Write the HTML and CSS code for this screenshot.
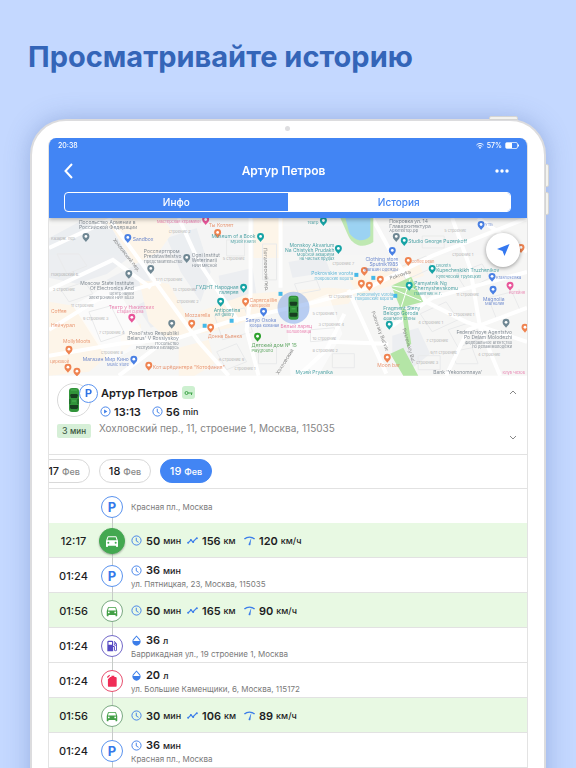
FILE: index.html
```html
<!DOCTYPE html>
<html lang="ru">
<head>
<meta charset="utf-8">
<meta name="viewport" content="width=device-width, initial-scale=1">
<title>История поездок</title>
<link rel="stylesheet" href="styles.css">
</head>
<body>
<svg class="sprite" aria-hidden="true">
  <symbol id="car" viewBox="0 0 24 24"><path d="M18.92 6.01C18.72 5.42 18.16 5 17.5 5h-11c-.66 0-1.21.42-1.42 1.01L3 12v8c0 .55.45 1 1 1h1c.55 0 1-.45 1-1v-1h12v1c0 .55.45 1 1 1h1c.55 0 1-.45 1-1v-8zM6.5 16a1.5 1.5 0 1 1 0-3 1.5 1.5 0 0 1 0 3zm11 0a1.5 1.5 0 1 1 0-3 1.5 1.5 0 0 1 0 3zM5 11l1.5-4.5h11L19 11z"/></symbol>
  <symbol id="fuel" viewBox="0 0 24 24"><path fill-rule="evenodd" d="M19.77 7.23l.01-.01-3.72-3.72L15 4.56l2.11 2.11A2.5 2.5 0 0 0 18 11.5c.36 0 .69-.08 1-.21v7.21a1 1 0 0 1-2 0V14a2 2 0 0 0-2-2h-1V5a2 2 0 0 0-2-2H6a2 2 0 0 0-2 2v16h10v-7.5h1.500v5a2.500 2.500 0 0 0 5 0V9c0-.69-.28-1.320-.73-1.770zM12 10H6V5h6zM18 10a1 1 0 1 1 0-2 1 1 0 0 1 0 2z"/></symbol>
  <symbol id="canister" viewBox="0 0 24 24"><path d="M5 9l4-4h2V3h5v2h2a2 2 0 0 1 2 2v13a2 2 0 0 1-2 2H7a2 2 0 0 1-2-2z"/><path d="M4 6l4-4" stroke="currentColor" stroke-width="2"/></symbol>
  <symbol id="clock" viewBox="0 0 24 24"><g fill="none" stroke="currentColor" stroke-width="2"><circle cx="12" cy="12" r="10"/><path d="M11.500 6v7l5 3"/></g></symbol>
  <symbol id="play" viewBox="0 0 24 24"><circle cx="12" cy="12" r="10" fill="none" stroke="currentColor" stroke-width="2"/><path d="M9 7.500v9l7-4.500z"/></symbol>
  <symbol id="route" viewBox="0 0 24 24"><path d="M2.500 17l6-6 4.500 4 8-8" fill="none" stroke="currentColor" stroke-width="2.500"/><circle cx="2.500" cy="17" r="2.200"/><circle cx="8.500" cy="11" r="2.200"/><circle cx="13.500" cy="15" r="2.200"/><circle cx="21.500" cy="7" r="2.200"/></symbol>
  <symbol id="speed" viewBox="0 0 24 24"><path d="M1 9c6-6 16-6 22 0" fill="none" stroke="currentColor" stroke-width="3"/><path d="M16 6L14 21a2 2 0 0 1-4-1z"/></symbol>
  <symbol id="drop" viewBox="0 0 24 24"><path fill-rule="evenodd" d="M12 1l6 6.500a9 9 0 1 1-12 0zM12 4L7.500 9C6 10.500 5 12 5 13h14c0-1-1-2.500-2.500-4z"/></symbol>
  <symbol id="topcar" viewBox="0 0 12 26"><rect x="1" y="1" width="10" height="24" rx="3" fill="#31943a"/><path d="M2 8l1-1h6l1 1-1 3H3zM2 18h8v3l-1 1H3l-1-1z" fill="#173e20"/><path d="M2 12v5M10 12v5" stroke="#1b5025"/><path d="M3 3h6M4 14h4" stroke="#4cb354"/></symbol>
  <defs>
    <g id="pin"><path d="M4 0a3.500 3.500 0 0 1 3.500 3.500C7.500 6 5 7 4 9 3 7 .5 6 .5 3.500A3.500 3.500 0 0 1 4 0z"/><circle cx="4" cy="3.500" r="1.400" fill="#fff"/></g>
  </defs>
</svg>

<main class="promo">
  <h1 class="headline">Просматривайте историю</h1>
  <div class="tablet">
    <span class="key key-top"></span><span class="key key-up"></span><span class="key key-down"></span>
    <span class="camera"></span>
    <div class="screen">
      <header class="bar">
        <div class="status">
          <span>20:38</span>
          <span class="status-right">
            <svg width="8" height="6" viewBox="0 0 16 12" fill="none" stroke="#fff" stroke-width="2"><path d="M1 4c4-4 10-4 14 0M3.500 7c3-2.500 6-2.500 9 0"/><path d="M5.500 9a4 4 0 0 1 5 0L8 12z" fill="#fff" stroke="none"/></svg>
            <span>57%</span>
            <svg width="15" height="7" viewBox="0 0 15 7"><rect x=".5" y=".5" width="12" height="6" rx="1.500" fill="none" stroke="#fff" stroke-opacity=".7"/><rect x="1" y="1" width="6" height="5" fill="#fff"/><path d="M13.500 2.500v2" stroke="#fff"/></svg>
          </span>
        </div>
        <div class="title-row">
          <button class="icon-btn back" aria-label="Назад"><svg width="10" height="16" viewBox="0 0 10 16" fill="none" stroke="#fff" stroke-width="2"><path d="M8 1L1.500 8 8 15"/></svg></button>
          <h2>Артур Петров</h2>
          <button class="icon-btn more" aria-label="Ещё"><svg width="14" height="4" viewBox="0 0 14 4" fill="#fff"><circle cx="2" cy="2" r="1.700"/><circle cx="7" cy="2" r="1.700"/><circle cx="12" cy="2" r="1.700"/></svg></button>
        </div>
        <div class="tabs">
          <button class="tab">Инфо</button>
          <button class="tab tab-on" aria-pressed="true">История</button>
        </div>
      </header>

      <section class="map" aria-label="Карта">
        <svg class="map-art" viewBox="0 0 479 158" preserveAspectRatio="xMidYMid slice">
          <rect width="479" height="158" fill="#f6f6f5"/>
          <g fill="#eceef1">
            <path d="M0 20l30-16 34 8 16 28-22 16-30 10L0 60zM58 62l34-18 10 20-34 16zM118 20l30-10 14 44-10 30-20-30zM88 88l14-8 14 24-14 6zM170 58l34-8 4 28-34 6zM240 44l36-6 6 16-38 6zM344 118l26-8 12 26-20 16-18-14z"/>
          </g>
          <g fill="#fdf5e9">
            <path d="M54 0h60l10 14-14 20-24 12-22-34zM90 62l30 4 26 46-24 12-22-20zM0 84l24 4 36 50-20 16-40 4zM150 94l50-18 80-6 30 2-10 14-88 10-30 14-30 6zM300 60l70-16 6 14-66 20zM72 116l20-10v14l-20 16zM130 130l30-8 6 24-20 12h-16zM205 0h30l-4 40h-26z"/>
          </g>
          <g fill="#fff"><path d="M238 92l42-16 14 40-24 42h-28zM24 88l40-24 36 60-40 20z" opacity=".6"/></g>
          <g fill="none" stroke="#e9eaeb" stroke-width="1">
            <path d="M8 36h22l8 12-20 8zM12 72l24-8 8 12-24 8zM40 94l22-6 14 28-24 8zM166 98l30-8 8 24-30 8zM178 22h18v16h-18zM214 26h14v36h-14zM246 66l22-4 4 10-22 4zM262 112l24-2v12l-24 2zM372 96l26-12 12 18-26 12zM400 112l24-8 10 16-24 10zM374 18h22v12h-22zM350 50l28-12 6 12-26 12zM408 56l26-10 8 14-24 12zM168 134l20-8 10 18-20 8zM210 128h18v18h-18zM370 138h22v14h-22zM404 134l20-4 6 16h-22zM440 80l24-6 8 18-24 8zM284 136h22v14h-22z"/>
          </g>
          <g fill="none" stroke="#fff" stroke-width="4">
            <path d="M0 30l60-28M60 0l90 124 30 34M0 72l64-30 38 28M0 112l48-30 64-18M0 138l70-12 60-6 50-16 80-18 60-16 64-32 95-38M130 0l20 44 40 60M202 0v76l-4 36 12 46M232 0v70M324 0l24 44 30 40 40 20 61 20M300 72l38 84M296 96l-18 36-28 26M280 124l60 2M344 108l40-28 95-26M404 0l18 50 10 60 20 48M430 0l49 34M70 158l50-38M398 158l22-46 59-22"/>
          </g>
          <path d="M292 0h33v24c-10 7-20 4-25-6z" fill="#bfe8b3"/>
          <path d="M297 0h25v18c-7 7-16 5-21-3z" fill="#9cd2f2"/>
          <path d="M343 68l20-9 12 25-23 6z" fill="#b4e5a6"/>
          <path d="M344 71l29 12M362 61l-9 28M343 68l28 4" stroke="#fff" fill="none"/>
          <path d="M353 90l5 2 5 34-4 4zM342 136l13-6 15 28h-15z" fill="#b4e5a6"/>

          <g class="t grey">
            <text x="2" y="58">Покровский б.</text><text x="4" y="73">2 строение</text><text x="22" y="89">11 строение</text><text x="34" y="102">9 строение 3</text><text x="50" y="116">7 строение 4</text><text x="52" y="136">строение 8</text><text x="107" y="63">17/1 строение</text><text x="124" y="73">13 строение</text><text x="128" y="85">строение 2</text><text x="2" y="22">Казарм. пер.</text><text x="120" y="15">строение 2</text><text x="174" y="42">5 строение</text><text x="284" y="47">строение 7</text><text x="280" y="80">12 строение</text><text x="264" y="97">5 строение 1</text><text x="270" y="108">3 строение 4</text><text x="264" y="122">10 строение</text><text x="264" y="134">8 строение 2</text><text x="170" y="143">6 строение 9</text><text x="186" y="152">строение 1</text><text x="370" y="106">4 строение 1</text><text x="378" y="124">7 строение</text><text x="382" y="136">9/11 строение</text><text x="368" y="146">строение 3</text><text x="430" y="138">4 строение</text><text x="400" y="98">12 строение 1</text><text x="408" y="78">11 строение</text><text x="404" y="38">строение 1</text><text x="396" y="14">5 строение</text>
          </g>
          <g class="t road"><text transform="translate(64 22) rotate(52)">Хохловский пер.</text><text transform="translate(215 30) rotate(88)">Потаповский пер.</text><text transform="translate(230 157) rotate(-58)">Хохловский</text><text transform="translate(323 94) rotate(70)">Pokrovsky Bul'var</text><text transform="translate(354 111) rotate(74)">Pokrovskiy Bul.</text><text transform="translate(342 62) rotate(-18)">Pokrovka</text></g>

          <g class="pin-slate"><use href="#pin" x="33" y="15"/><use href="#pin" x="134" y="36"/><use href="#pin" x="98" y="47"/><use href="#pin" x="76" y="52"/><use href="#pin" x="119" y="102"/><use href="#pin" x="344" y="15"/><use href="#pin" x="454" y="101"/></g>
          <g class="pin-blue"><use href="#pin" x="75" y="16"/><use href="#pin" x="81" y="138"/><use href="#pin" x="211" y="90"/><use href="#pin" x="340" y="29"/><use href="#pin" x="440" y="55"/><use href="#pin" x="441" y="68"/><use href="#pin" x="429" y="3"/></g>
          <g class="pin-teal"><use href="#pin" x="208" y="15"/><use href="#pin" x="191" y="66"/><use href="#pin" x="168" y="80"/><use href="#pin" x="271" y="-1"/><use href="#pin" x="286" y="27"/><use href="#pin" x="352" y="19"/><use href="#pin" x="380" y="47"/><use href="#pin" x="357" y="64"/><use href="#pin" x="337" y="103"/></g>
          <g class="pin-green"><use href="#pin" x="205" y="115"/></g>
          <g class="pin-orange"><use href="#pin" x="139" y="102"/><use href="#pin" x="16" y="128"/><use href="#pin" x="15" y="146"/><use href="#pin" x="24" y="150"/><use href="#pin" x="96" y="144"/><use href="#pin" x="165" y="11"/><use href="#pin" x="193" y="80"/><use href="#pin" x="158" y="106"/><use href="#pin" x="312" y="49"/><use href="#pin" x="309" y="62"/><use href="#pin" x="356" y="39"/><use href="#pin" x="328" y="58"/><use href="#pin" x="317" y="64"/><use href="#pin" x="335" y="136"/><use href="#pin" x="469" y="26"/><use href="#pin" x="473" y="106"/></g>
          <g class="pin-pink"><use href="#pin" x="79" y="96"/><use href="#pin" x="458" y="64"/><use href="#pin" x="153" y="-2"/></g>
          <g fill="#45b9e8"><rect x="154" y="106" width="4" height="4"/><rect x="230" y="74" width="4" height="4"/><rect x="181" y="101" width="4" height="4"/><rect x="306" y="55" width="4" height="4"/><rect x="323" y="58" width="4" height="4"/><rect x="345" y="76" width="4" height="4"/></g>

          <g class="t slate">
            <text x="30" y="6">Посольство Армении в</text><text x="30" y="11">Российской Федерации</text>
            <text x="95" y="35">Росспиртпром</text><text x="95" y="40">Predstavitelstvo</text><text x="95" y="45" class="s">Представительство</text>
            <text x="143" y="39">Ogni Institut</text><text x="143" y="44">Weterinarii</text><text x="143" y="49" class="s">НИИ Мясной</text>
            <text x="85" y="67" text-anchor="end">Moscow State Institute</text><text x="85" y="72" text-anchor="end">Of Electronics And</text><text x="85" y="77" class="s" text-anchor="end">Центр науки</text><text x="85" y="81" class="s" text-anchor="end">электроники НИУ ВШЭ</text>
            <text x="130" y="117" text-anchor="end">Posol'stvo Respubliki</text><text x="130" y="122" text-anchor="end">Belarus' V Rossiyskoy</text><text x="130" y="127" class="s" text-anchor="end">Посольство</text><text x="130" y="131" class="s" text-anchor="end">Республики Беларусь</text>
            <text x="341" y="5">Покровка ул. 14</text><text x="341" y="10">Главархитектура</text><text x="341" y="14" class="s">Архитектор.рф</text>
            <text x="464" y="116" text-anchor="end">Federal'noye Agentstvo</text><text x="464" y="121" text-anchor="end">Po Delam Molodezhi</text><text x="464" y="126" class="s" text-anchor="end">Федеральное агентство</text><text x="464" y="130" class="s" text-anchor="end">по делам молодёжи</text>
            <text x="385" y="156">Bank 'Yekonomnaya'</text>
          </g>
          <g class="t blue">
            <text x="84" y="23">Sandbox</text><text x="80" y="143" text-anchor="end">Магазин Мир Кино</text><text x="80" y="148" class="s" text-anchor="end">Music store</text>
            <text x="197" y="104">Sanyo Osoka</text><text x="201" y="109" class="s">Кобра кожаная</text>
            <text x="350" y="43" text-anchor="end">Clothing store</text><text x="350" y="48" text-anchor="end">Sputnik1985</text><text x="350" y="53" class="s" text-anchor="end">Магазин Одежды</text>
            <text x="448" y="61" class="s">Krasnoselska</text><text x="435" y="83">Magnolia</text><text x="437" y="87" class="s">Магнолия</text><text x="437" y="8" class="s">УТБ</text>
          </g>
          <g class="t teal">
            <text x="207" y="20" text-anchor="end">Museum of a Book</text><text x="207" y="25" class="s" text-anchor="end">Музей Книги</text>
            <text x="286" y="29" text-anchor="end">Monskoy Akvarium</text><text x="286" y="34" text-anchor="end">Na Chistykh Prudakh</text><text x="286" y="38" class="s" text-anchor="end">Морской аквариум</text><text x="286" y="42" class="s" text-anchor="end">на Чистых прудах</text>
            <text x="190" y="71" text-anchor="end">ГУДНТ Народная</text><text x="190" y="76" text-anchor="end">галерея</text><text x="165" y="94">Antipoetina</text><text x="166" y="98" class="s">Art gallery</text>
            <text x="360" y="25">Studio George Puzenkoff</text><text x="388" y="49" class="s">Dvorets</text><text x="388" y="54">Kupecheskikh Truzhenikov</text><text x="388" y="60" class="s">Купеческий Трубецких</text>
            <text x="366" y="67">Pamyatnik Ng</text><text x="366" y="72">Chernyshevskomu</text><text x="366" y="77" class="s">Памятник Н.Г.</text><text x="335" y="92">Fragment Steny</text><text x="335" y="97">Belogo Goroda</text><text x="335" y="102" class="s">Фрагмент стены</text><text x="247" y="156">Музей Pryanika</text><text x="270" y="6" class="s" text-anchor="end">Театр</text>
          </g>
          <g class="t sky"><text x="305" y="57" text-anchor="end">Pokrovskie vorota</text><text x="305" y="62" class="s" text-anchor="end">Покровские Ворота</text><text x="345" y="78" class="s" text-anchor="end">Pokrovskiye Vorota</text><text x="345" y="82" class="s" text-anchor="end">Покровские ворота</text></g>
          <g class="t leaf"><text x="203" y="129">Детский дом № 15</text><text x="203" y="134" class="s">Playground</text></g>
          <g class="t orange"><text x="136" y="99">Mozzarella</text><text x="14" y="125">MollyMoots</text><text x="2" y="95">Coffee</text><text x="2" y="109">Нейчурал</text><text x="1" y="145" class="s">Цирковой</text><text x="104" y="151">Кот шрёдингера "Котофания"</text><text x="160" y="9">Ты Котлет</text><text x="201" y="84">Capercaillie</text><text x="201" y="89" class="s">каперкейл</text><text x="159" y="120">Донна Бьянка</text><text x="363" y="45" class="s">Coffee bean</text><text x="329" y="149">Moon bar</text></g>
          <g class="t pink"><text x="60" y="91">Театр у Никитских</text><text x="68" y="95" class="s">Старая сцена</text><text x="152" y="5" class="s" text-anchor="end">Мастерская керамики</text><text x="232" y="110">Белый ларец</text><text x="238" y="115" class="s">Волшебница</text><text x="477" y="76" class="s" text-anchor="end">Котейня</text><text x="477" y="156" class="s" text-anchor="end">Клуб Чехов</text></g>
          <circle cx="245" cy="90" r="16" fill="#6f9be8" opacity=".48"/>
          <use href="#topcar" x="239" y="77" width="12" height="26"/>
        </svg>
        <button class="locate" aria-label="Моё местоположение"><svg width="14" height="14" viewBox="0 0 14 14"><path d="M13.500 1L8.500 13 6.500 8 1 6z" fill="#3478f0"/></svg></button>
      </section>

      <section class="summary">
        <div class="who">
          <div class="avatar"><svg width="12" height="26"><use href="#topcar"/></svg><span class="mini-p">P</span></div>
          <span class="ago">3 <small>мин</small></span>
        </div>
        <div class="facts">
          <h3>Артур Петров <span class="key-tag"><svg width="9" height="6" viewBox="0 0 9 6" fill="none" stroke="#3fa34a"><circle cx="2.500" cy="3" r="1.500"/><path d="M4 3h4.500M7.500 3v2"/></svg></span></h3>
          <p class="times"><svg class="ic"><use href="#play"/></svg><b>13:13</b><svg class="ic second"><use href="#clock"/></svg><b>56</b> <small>min</small></p>
          <p class="address">Хохловский пер., 11, строение 1, Москва, 115035</p>
        </div>
        <div class="steps">
          <button class="icon-btn" aria-label="Предыдущий"><svg width="8" height="5" viewBox="0 0 8 5"><path d="M1 4l3-3 3 3"/></svg></button>
          <button class="icon-btn" aria-label="Следующий"><svg width="8" height="5" viewBox="0 0 8 5"><path d="M1 1l3 3 3-3"/></svg></button>
        </div>
      </section>

      <nav class="dates">
        <button class="date">17 <small>Фев</small></button>
        <button class="date">18 <small>Фев</small></button>
        <button class="date date-on" aria-pressed="true">19 <small>Фев</small></button>
      </nav>

      <ol class="log">
        <li class="row row-first"><span></span><div class="rail"><span class="dot">P</span></div><div class="info"><p class="place">Красная пл., Москва</p></div></li>
        <li class="row drive"><time>12:17</time><div class="rail"><span class="dot dot-live"><svg><use href="#car"/></svg></span></div><div class="info metrics"><p><svg class="ic"><use href="#clock"/></svg><b>50</b> <small>мин</small></p><p><svg class="ic"><use href="#route"/></svg><b>156</b> <small>км</small></p><p><svg class="ic"><use href="#speed"/></svg><b>120</b> <small>км/ч</small></p></div></li>
        <li class="row"><time>01:24</time><div class="rail"><span class="dot">P</span></div><div class="info stop"><p><svg class="ic"><use href="#clock"/></svg><b>36</b> <small>мин</small></p><p class="place">ул. Пятницкая, 23, Москва, 115035</p></div></li>
        <li class="row drive"><time>01:56</time><div class="rail"><span class="dot dot-car"><svg><use href="#car"/></svg></span></div><div class="info metrics"><p><svg class="ic"><use href="#clock"/></svg><b>50</b> <small>мин</small></p><p><svg class="ic"><use href="#route"/></svg><b>165</b> <small>км</small></p><p><svg class="ic"><use href="#speed"/></svg><b>90</b> <small>км/ч</small></p></div></li>
        <li class="row"><time>01:24</time><div class="rail"><span class="dot dot-fuel"><svg><use href="#fuel"/></svg></span></div><div class="info stop"><p><svg class="ic"><use href="#drop"/></svg><b>36</b> <small>л</small></p><p class="place">Баррикадная ул., 19 строение 1, Москва</p></div></li>
        <li class="row"><time>01:24</time><div class="rail"><span class="dot dot-can"><svg><use href="#canister"/></svg></span></div><div class="info stop"><p><svg class="ic"><use href="#drop"/></svg><b>20</b> <small>л</small></p><p class="place">ул. Большие Каменщики, 6, Москва, 115172</p></div></li>
        <li class="row drive"><time>01:56</time><div class="rail"><span class="dot dot-car"><svg><use href="#car"/></svg></span></div><div class="info metrics"><p><svg class="ic"><use href="#clock"/></svg><b>30</b> <small>мин</small></p><p><svg class="ic"><use href="#route"/></svg><b>106</b> <small>км</small></p><p><svg class="ic"><use href="#speed"/></svg><b>89</b> <small>км/ч</small></p></div></li>
        <li class="row"><time>01:24</time><div class="rail"><span class="dot">P</span></div><div class="info stop"><p><svg class="ic"><use href="#clock"/></svg><b>36</b> <small>мин</small></p><p class="place">Красная пл., Москва</p></div></li>
      </ol>
    </div>
  </div>
</main>
</body>
</html>
```
FILE: styles.css
```css
* { box-sizing: border-box; }
body, h1, h2, h3, p, ol { margin: 0; padding: 0; }
body {
  background: #c4d8ff;
  color: #1d1d1f;
  font-family: Inter, "Liberation Sans", sans-serif;
  overflow: hidden;
}
button { font: inherit; color: inherit; border: 0; padding: 0; background: none; cursor: pointer; }
svg { display: block; flex: none; }
.ic, .dot svg { fill: currentColor; }
.sprite { position: absolute; width: 0; height: 0; }

.promo { height: 100vh; overflow: hidden; padding: 0 30px; }
.headline {
  height: 119px;
  padding-top: 38px;
  margin-left: -2px;
  font-size: 29px;
  line-height: 38px;
  font-weight: 700;
  color: #3465b8;
  white-space: nowrap;
}

/* Device frame */
.tablet {
  position: relative;
  min-height: 100vh;
  padding: 17px 16px 0;
  background: #fff;
  border: 2px solid #dcdcde;
  border-radius: 36px 36px 0 0;
  box-shadow: 0 0 24px rgba(70, 100, 170, .35);
}
.key { position: absolute; background: #f3f3ef; border: 1px solid #d5d5d3; }
.key-top { top: -5px; right: 26px; width: 29px; height: 4px; border-radius: 2px 2px 0 0; }
.key-up, .key-down { right: -5px; width: 4px; height: 23px; border-radius: 0 2px 2px 0; }
.key-up { top: 43px; }
.key-down { top: 71px; }
.camera { position: absolute; top: 5px; left: 50%; width: 5px; height: 5px; margin-left: -3px; border-radius: 50%; background: #dedee0; }
.screen { border: solid #e3e3e3; border-width: 0 1px; border-radius: 8px 8px 0 0; overflow: hidden; background: #fff; }

/* App bar */
.bar { position: relative; z-index: 1; background: #4285f4; color: #fff; padding: 0 16px 6px 15px; box-shadow: 0 2px 4px rgba(0, 0, 0, .25); }
.status { display: flex; justify-content: space-between; align-items: center; height: 15px; margin: 0 -9px 0 -6px; font-size: 7px; font-weight: 500; }
.status-right { display: flex; align-items: center; gap: 3px; }
.title-row { display: grid; grid-template-columns: 10px 1fr 18px; align-items: center; height: 39px; padding-bottom: 3px; }
.title-row h2 { text-align: center; font-size: 12px; line-height: 18px; font-weight: 600; }
.icon-btn { display: grid; place-items: center; }
.tabs { display: grid; grid-template-columns: 1fr 1fr; height: 20px; border: 1px solid #fff; border-radius: 4px; overflow: hidden; font-size: 10px; font-weight: 500; }
.tab-on { background: #fff; color: #4285f4; }

/* Map */
.map { position: relative; }
.map-art { width: 100%; aspect-ratio: 479 / 158; }
.locate { position: absolute; top: 15px; right: 7px; width: 34px; height: 34px; border-radius: 50%; background: #fff; display: grid; place-items: center; box-shadow: 0 1px 4px rgba(0, 0, 0, .4); }
.pin-slate { fill: #6f8793; }
.pin-blue { fill: #4a80e4; }
.pin-teal { fill: #17a3a5; }
.pin-green { fill: #2ca02c; }
.pin-orange { fill: #ef8350; }
.pin-pink { fill: #e8569a; }
.t { font-size: 5px; opacity: .8; }
.t .s { font-size: 4px; }
.slate { fill: #66717c; }
.blue { fill: #4c6fc4; }
.teal { fill: #278f93; }
.sky { fill: #3fa9d2; }
.leaf { fill: #3c9440; }
.orange { fill: #e58258; }
.pink { fill: #e666a0; }
.grey { fill: #969696; font-size: 4px; opacity: .7; }
.road { fill: #666; }

/* Current state */
.summary { display: grid; grid-template-columns: 34px 1fr 14px; gap: 8px; padding: 7px 7px 0 8px; height: 79px; border-bottom: 1px solid #e2e2e2; }
.avatar { position: relative; display: grid; place-items: center; width: 34px; height: 34px; border: 1px solid #d9d9d9; border-radius: 50%; }
.mini-p { position: absolute; top: 0; right: -8px; display: grid; place-items: center; width: 19px; height: 19px; border: 1px solid #5a93ef; border-radius: 50%; background: #fff; color: #2f74e6; font-size: 11px; font-weight: 700; }
.ago { display: block; margin-top: 7px; height: 14px; border-radius: 2px; background: #d6efd7; color: #35513a; text-align: center; font-size: 9px; line-height: 14px; }
.ago small { font-size: 8px; }
.facts h3 { display: flex; align-items: center; gap: 4px; height: 20px; padding-left: 2px; font-size: 11px; font-weight: 600; }
.key-tag { display: grid; place-items: center; width: 13px; height: 13px; border-radius: 3px; background: #cdf0d0; }
.times { display: flex; align-items: center; height: 18px; padding-left: 1px; font-size: 11px; }
.times b { margin: 0 3px 0 3px; }
.times .second { margin-left: 8px; }
.address { font-size: 10px; line-height: 14px; color: #858585; }
b { font-weight: 600; }
small { font-size: 9px; font-weight: 500; }
.ic { width: 11px; height: 11px; color: #3b7de9; }
.steps { display: flex; flex-direction: column; justify-content: space-between; padding: 7px 0 14px; }
.steps svg { fill: none; stroke: #888; }

/* Day picker */
.dates { display: flex; align-items: center; gap: 9px; height: 34px; border-bottom: 1px solid #e2e2e2; overflow: hidden; }
.date { flex: none; width: 52px; height: 24px; border: 1px solid #d9d9d9; border-radius: 12px; font-size: 11px; font-weight: 500; }
.date:first-child { margin-left: -11px; }
.date small { color: #888; }
.date-on, .date-on small { background: #4285f4; border-color: #4285f4; color: #fff; }

/* Trip log */
.log { list-style: none; }
.row { display: grid; grid-template-columns: 49px 28px 1fr; align-items: center; height: 35px; padding-top: 2px; border-bottom: 1px solid #e2e2e2; font-size: 11px; }
.row-first { height: 34px; border-bottom: 0; }
.drive { background: #e8f9e3; }
time { text-align: center; font-weight: 500; }
.rail { position: relative; align-self: stretch; display: grid; place-items: center; }
.rail::before { content: ""; position: absolute; top: -2px; bottom: -1px; left: 50%; width: 1px; background: #c6cbc8; }
.row-first .rail::before { top: 50%; }
.dot { position: relative; display: grid; place-items: center; width: 22px; height: 22px; border: 1px solid #5a93ef; border-radius: 50%; background: #fff; color: #3478ea; font-size: 13px; font-weight: 700; }
.dot svg { width: 14px; height: 14px; }
.dot-car { color: #43a047; border-color: #7aa982; }
.dot-fuel { color: #5549c2; border-color: #7369c9; }
.dot-can { color: #f02c56; border-color: #e8506f; }
.dot-live { width: 26px; height: 26px; background: #43a850; border-color: #43a850; color: #fff; box-shadow: 0 1px 2px rgba(0, 0, 0, .3); }
.dot-live svg { width: 16px; height: 16px; }
.info { padding-left: 5px; }
.stop { padding-top: 2px; }
.info p { display: flex; align-items: center; height: 14px; gap: 3px; white-space: nowrap; }
.info b { padding-left: 1px; }
.metrics { display: grid; grid-template-columns: 56px 57px auto; justify-content: start; }
.info .place { height: 13px; font-size: 8px; color: #7a7a7a; }
```
